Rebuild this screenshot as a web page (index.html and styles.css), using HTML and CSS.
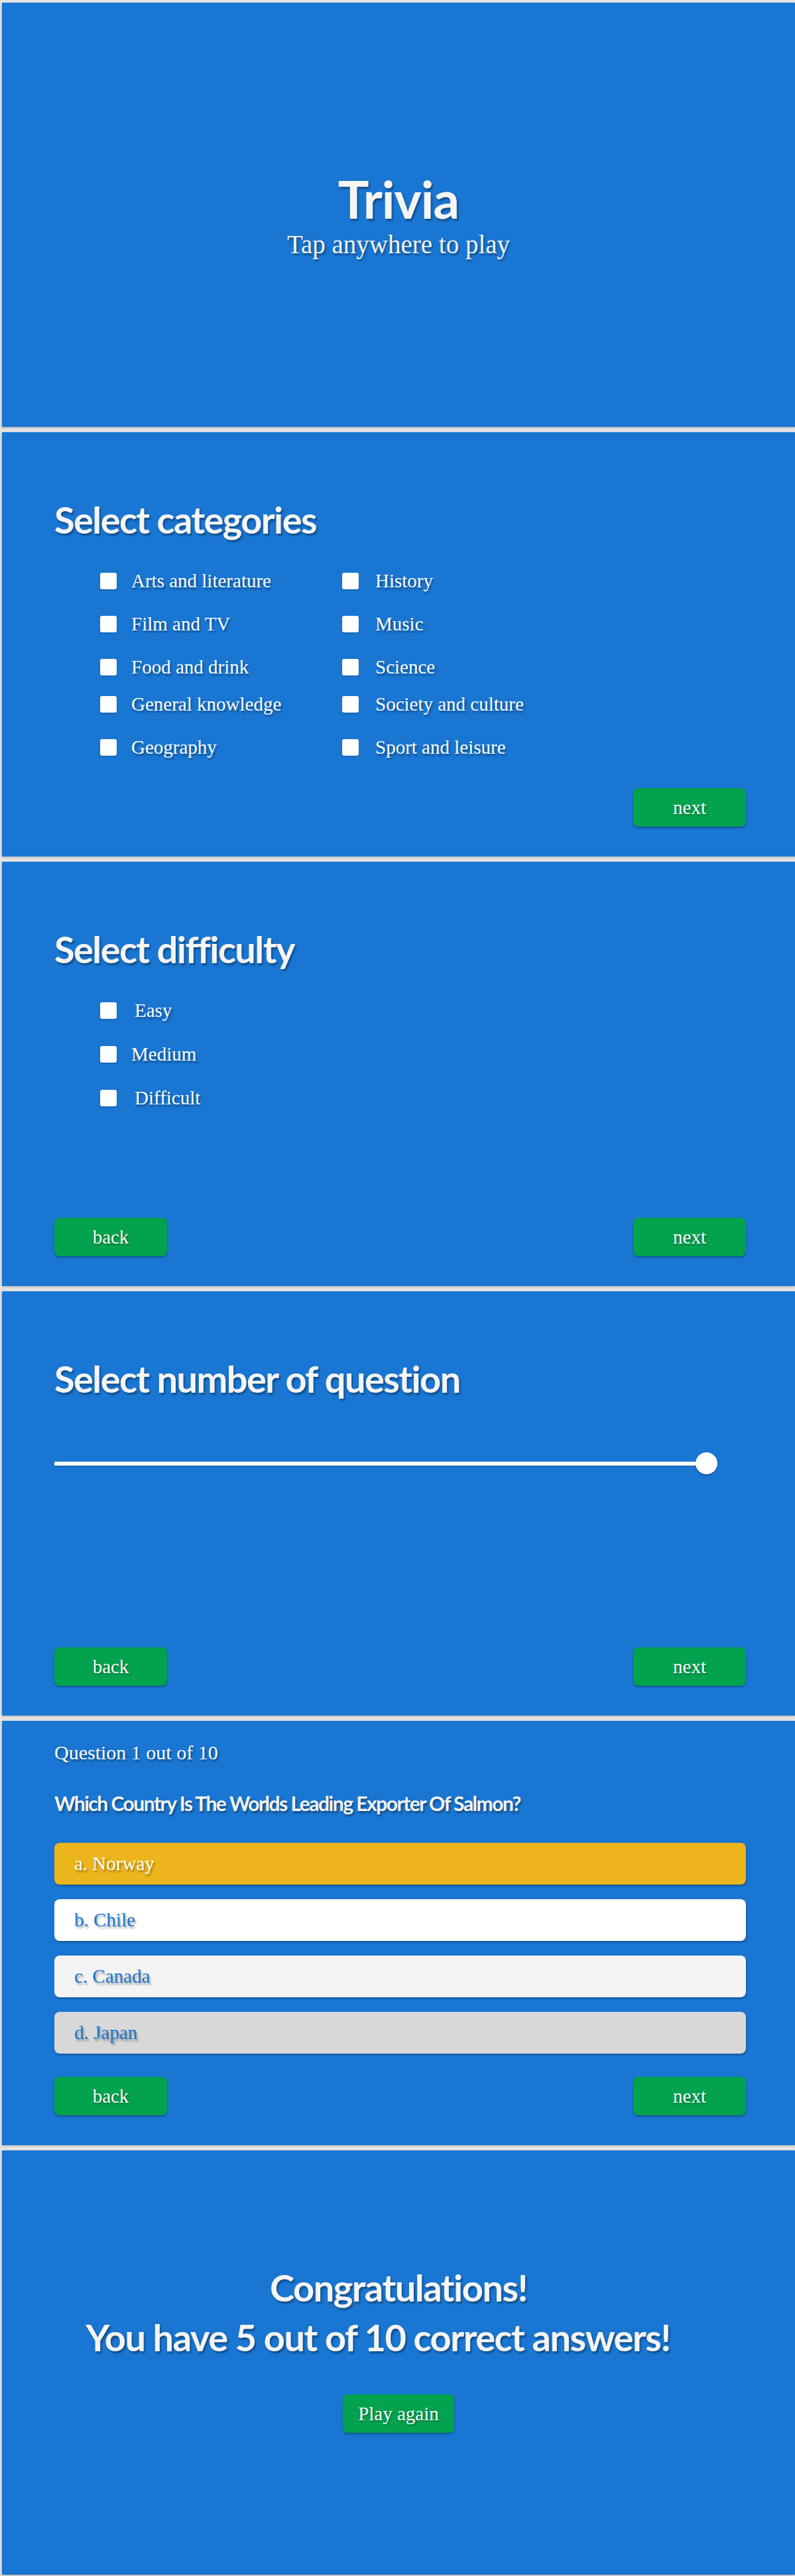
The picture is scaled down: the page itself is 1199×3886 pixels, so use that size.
FILE: index.html
```html
<!DOCTYPE html>
<html lang="en">
<head>
<meta charset="utf-8">
<title>Trivia</title>
<link rel="stylesheet" href="styles.css">
</head>
<body>
<section class="screen screen-start">
  <h1 class="title">Trivia</h1>
  <p class="subtitle">Tap anywhere to play</p>
</section>

<section class="screen">
  <h2 class="heading">Select categories</h2>
  <div class="cat-grid">
    <label class="opt"><input type="checkbox" class="check"><span>Arts and literature</span></label>
    <label class="opt opt-r"><input type="checkbox" class="check"><span>History</span></label>
    <label class="opt"><input type="checkbox" class="check"><span>Film and TV</span></label>
    <label class="opt opt-r"><input type="checkbox" class="check"><span>Music</span></label>
    <label class="opt opt-short"><input type="checkbox" class="check"><span>Food and drink</span></label>
    <label class="opt opt-r opt-short"><input type="checkbox" class="check"><span>Science</span></label>
    <label class="opt"><input type="checkbox" class="check"><span>General knowledge</span></label>
    <label class="opt opt-r"><input type="checkbox" class="check"><span>Society and culture</span></label>
    <label class="opt"><input type="checkbox" class="check"><span>Geography</span></label>
    <label class="opt opt-r"><input type="checkbox" class="check"><span>Sport and leisure</span></label>
  </div>
  <div class="nav nav-end">
    <button class="btn">next</button>
  </div>
</section>

<section class="screen">
  <h2 class="heading">Select difficulty</h2>
  <div class="diff-list">
    <label class="opt opt-diff"><input type="checkbox" class="check"><span class="lbl-easy">Easy</span></label>
    <label class="opt opt-diff"><input type="checkbox" class="check"><span>Medium</span></label>
    <label class="opt opt-diff"><input type="checkbox" class="check"><span class="lbl-easy">Difficult</span></label>
  </div>
  <div class="nav">
    <button class="btn">back</button>
    <button class="btn">next</button>
  </div>
</section>

<section class="screen">
  <h2 class="heading">Select number of question</h2>
  <input type="range" class="slider" min="1" max="10" value="10">
  <div class="nav">
    <button class="btn">back</button>
    <button class="btn">next</button>
  </div>
</section>

<section class="screen screen-question">
  <p class="counter">Question 1 out of 10</p>
  <h3 class="question">Which Country Is The Worlds Leading Exporter Of Salmon?</h3>
  <div class="answers">
    <div class="answer answer-selected">a. Norway</div>
    <div class="answer answer-b">b. Chile</div>
    <div class="answer answer-c">c. Canada</div>
    <div class="answer answer-d">d. Japan</div>
  </div>
  <div class="nav">
    <button class="btn">back</button>
    <button class="btn">next</button>
  </div>
</section>

<section class="screen screen-end">
  <h2 class="result">Congratulations!<span class="score">You have 5 out of 10 correct answers!</span></h2>
  <button class="btn btn-again">Play again</button>
</section>
</body>
</html>
```

FILE: styles.css
```css
* {
  box-sizing: border-box;
}

html, body {
  margin: 0;
  padding: 0;
}

body {
  background: #e3e3e3;
  padding-top: 4px;
  font-family: "Liberation Serif", "Times New Roman", serif;
  color: #ffffff;
}

.screen {
  height: 640px;
  width: calc(100% - 3px);
  margin: 0 0 8px 3px;
  background: #1976d2;
  box-shadow: 0 1px 3px rgba(0, 0, 0, 0.28);
  display: flex;
  flex-direction: column;
  padding: 99px 74px 45px 79px;
  text-shadow: 2px 3px 3px rgba(0, 0, 0, 0.35);
}

/* start screen */
.screen-start {
  padding: 0;
  align-items: center;
  justify-content: center;
}

.title {
  margin: 0;
  font-family: Lato, "Liberation Sans", sans-serif;
  font-weight: 700;
  font-size: 78px;
  line-height: 90px;
  letter-spacing: -1px;
  color: #f5f5f5;
}

.subtitle {
  margin: 0;
  font-size: 39px;
  line-height: 48px;
  color: #f5f5f5;
}

/* headings */
.heading {
  margin: 0;
  font-family: Lato, "Liberation Sans", sans-serif;
  font-weight: 700;
  font-size: 56px;
  line-height: 66px;
  letter-spacing: -1.6px;
  color: #f5f5f5;
}

/* options */
.cat-grid {
  margin: 47px 0 0 69px;
  display: grid;
  grid-template-columns: 365px 1fr;
  align-items: start;
}

.diff-list {
  margin: 47px 0 0 69px;
  display: flex;
  flex-direction: column;
}

.opt {
  display: flex;
  align-items: center;
  height: 25px;
  margin-bottom: 40px;
  font-size: 29px;
  line-height: 25px;
  white-space: nowrap;
}

.opt-short {
  margin-bottom: 31px;
}

.opt-diff {
  margin-bottom: 41px;
}

.check {
  appearance: none;
  -webkit-appearance: none;
  flex: none;
  width: 25px;
  height: 25px;
  margin: 0 22px 0 0;
  background: #ffffff;
  border-radius: 3px;
  box-shadow: 0 1px 2px rgba(0, 0, 0, 0.25);
}

.opt-r .check {
  margin-right: 25px;
}

.lbl-easy {
  margin-left: 5px;
}

/* buttons */
.nav {
  margin-top: auto;
  display: flex;
  justify-content: space-between;
}

.nav-end {
  justify-content: flex-end;
}

.btn {
  width: 170px;
  height: 58px;
  padding: 0;
  border: none;
  border-radius: 8px;
  background: #03a24e;
  color: #ffffff;
  font-family: "Liberation Serif", "Times New Roman", serif;
  font-size: 29px;
  line-height: 58px;
  text-shadow: 1px 2px 3px rgba(0, 0, 0, 0.35);
  box-shadow: 0 2px 3px rgba(0, 0, 0, 0.3);
  cursor: pointer;
}

/* slider */
.slider {
  -webkit-appearance: none;
  appearance: none;
  width: 1000px;
  height: 33px;
  margin: 78px 0 0 0;
  padding: 0;
  background: transparent;
}

.slider::-webkit-slider-runnable-track {
  height: 6px;
  background: #ffffff;
  border-radius: 0;
  box-shadow: 0 1px 1px rgba(0, 0, 0, 0.3);
}

.slider::-webkit-slider-thumb {
  -webkit-appearance: none;
  appearance: none;
  width: 33px;
  height: 33px;
  margin-top: -13.5px;
  border-radius: 50%;
  background: #ffffff;
  border: none;
  box-shadow: 0 2px 3px rgba(0, 0, 0, 0.3);
}

/* question */
.screen-question {
  padding-top: 30px;
}

.counter {
  margin: 0;
  font-size: 30px;
  line-height: 36px;
}

.question {
  margin: 40px 0 0 0;
  font-family: Lato, "Liberation Sans", sans-serif;
  font-weight: 700;
  font-size: 30px;
  line-height: 36px;
  letter-spacing: -1.5px;
  color: #f5f5f5;
}

.answers {
  margin-top: 42px;
  display: flex;
  flex-direction: column;
  gap: 22px;
}

.answer {
  height: 63px;
  border-radius: 8px;
  padding-left: 30px;
  font-size: 29px;
  line-height: 63px;
  color: #1976d2;
  box-shadow: 1px 2px 3px rgba(0, 0, 0, 0.3);
}

.answer-selected {
  background: #ebb51b;
  color: #ffffff;
}

.answer-b {
  background: #ffffff;
}

.answer-c {
  background: #f4f4f4;
}

.answer-d {
  background: #d8d8d8;
}

/* end screen */
.screen-end {
  padding: 169px 0 0 0;
  align-items: center;
}

.result {
  margin: 0;
  text-align: center;
  font-family: Lato, "Liberation Sans", sans-serif;
  font-weight: 700;
  font-size: 56px;
  line-height: 75px;
  letter-spacing: -1.5px;
  color: #f5f5f5;
}

.score {
  display: block;
  margin-right: 62px;
}

.btn-again {
  margin-top: 49px;
  width: 168px;
}
```
